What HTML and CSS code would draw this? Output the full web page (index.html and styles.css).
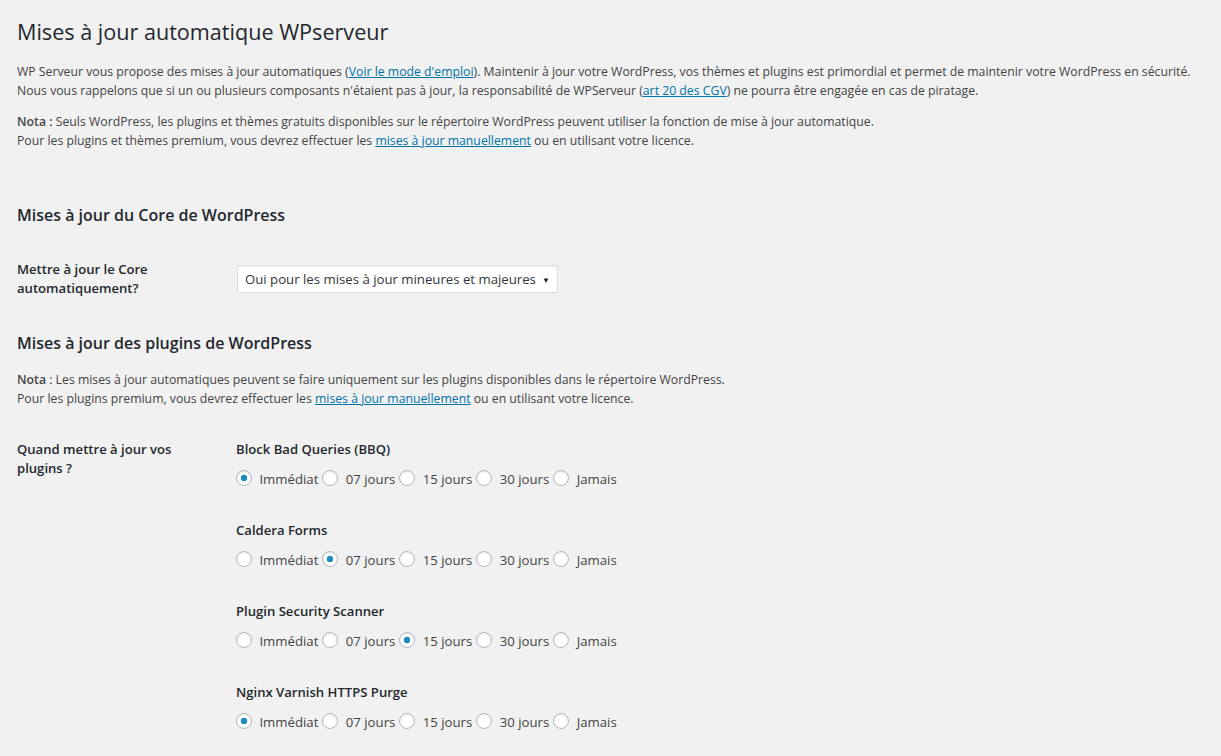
FILE: index.html
```html
<!DOCTYPE html>
<html lang="fr">
<head>
  <meta charset="UTF-8" />
  <title>Mises à jour automatique WPserveur</title>
  <link rel="stylesheet" href="styles.css">
</head>
<body>
  <div class="wrap">
    <h1>Mises à jour automatique WPserveur</h1>
    <p class="intro">WP Serveur vous propose des mises à jour automatiques (<a href="#">Voir le mode d'emploi</a>). Maintenir à jour votre WordPress, vos thèmes et plugins est primordial et permet de maintenir votre WordPress en sécurité.<br>
    Nous vous rappelons que si un ou plusieurs composants n'étaient pas à jour, la responsabilité de WPServeur (<a href="#">art 20 des CGV</a>) ne pourra être engagée en cas de piratage.</p>
    <p class="intro"><strong>Nota :</strong> Seuls WordPress, les plugins et thèmes gratuits disponibles sur le répertoire WordPress peuvent utiliser la fonction de mise à jour automatique.<br>
    Pour les plugins et thèmes premium, vous devrez effectuer les <a href="#">mises à jour manuellement</a> ou en utilisant votre licence.</p>

    <h2 class="core-title">Mises à jour du Core de WordPress</h2>
    <div class="form-row center">
      <label class="field-label" for="core">Mettre à jour le Core automatiquement?</label>
      <div class="select" id="core">
        <span>Oui pour les mises à jour mineures et majeures</span>
        <span class="arrow">▼</span>
      </div>
    </div>

    <h2 class="plugins-title">Mises à jour des plugins de WordPress</h2>
    <p class="intro"><strong>Nota</strong> : Les mises à jour automatiques peuvent se faire uniquement sur les plugins disponibles dans le répertoire WordPress.<br>
    Pour les plugins premium, vous devrez effectuer les <a href="#">mises à jour manuellement</a> ou en utilisant votre licence.</p>

    <div class="form-row plugins">
      <div class="field-label">Quand mettre à jour vos plugins ?</div>
      <div class="plugin-list">
        <div class="plugin">
          <div class="plugin-name">Block Bad Queries (BBQ)</div>
          <div class="choices">
            <label><input type="radio" name="bbq" checked> Immédiat</label><label><input type="radio" name="bbq"> 07 jours</label><label><input type="radio" name="bbq"> 15 jours</label><label><input type="radio" name="bbq"> 30 jours</label><label><input type="radio" name="bbq"> Jamais</label>
          </div>
        </div>
        <div class="plugin">
          <div class="plugin-name">Caldera Forms</div>
          <div class="choices">
            <label><input type="radio" name="caldera"> Immédiat</label><label><input type="radio" name="caldera" checked> 07 jours</label><label><input type="radio" name="caldera"> 15 jours</label><label><input type="radio" name="caldera"> 30 jours</label><label><input type="radio" name="caldera"> Jamais</label>
          </div>
        </div>
        <div class="plugin">
          <div class="plugin-name">Plugin Security Scanner</div>
          <div class="choices">
            <label><input type="radio" name="pss"> Immédiat</label><label><input type="radio" name="pss"> 07 jours</label><label><input type="radio" name="pss" checked> 15 jours</label><label><input type="radio" name="pss"> 30 jours</label><label><input type="radio" name="pss"> Jamais</label>
          </div>
        </div>
        <div class="plugin">
          <div class="plugin-name">Nginx Varnish HTTPS Purge</div>
          <div class="choices">
            <label><input type="radio" name="nginx" checked> Immédiat</label><label><input type="radio" name="nginx"> 07 jours</label><label><input type="radio" name="nginx"> 15 jours</label><label><input type="radio" name="nginx"> 30 jours</label><label><input type="radio" name="nginx"> Jamais</label>
          </div>
        </div>
      </div>
    </div>
  </div>
</body>
</html>
```

FILE: styles.css
```css
body {
  margin: 0;
  background: #f1f1f1;
  color: #444;
  font-family: "Open Sans", "Noto Sans", sans-serif;
  font-size: 12.25px;
  line-height: 19px;
}
.wrap {
  padding: 17px 17px 0 17px;
}
h1 {
  margin: 0;
  font-size: 21.6px;
  font-weight: 400;
  line-height: 29px;
  color: #23282d;
}
.intro {
  margin: 0 0 12px 0;
}
h1 + .intro {
  margin-top: 16px;
}
strong {
  font-weight: 600;
}
a {
  color: #0073aa;
  text-decoration: underline;
}
h2 {
  margin: 0;
  font-size: 16px;
  font-weight: 600;
  line-height: 22px;
  color: #23282d;
}
.core-title {
  margin-top: 54px;
}
.plugins-title {
  margin-top: 34px;
  margin-bottom: 16px;
}
.form-row {
  display: flex;
}
.form-row.center {
  align-items: center;
  margin-top: 34px;
}
.field-label {
  width: 220px;
  flex: none;
  font-size: 13.1px;
  font-weight: 600;
  line-height: 19px;
  color: #23282d;
}
.select {
  width: 321px;
  height: 28px;
  box-sizing: border-box;
  display: flex;
  align-items: center;
  justify-content: space-between;
  padding: 0 7px 0 7px;
  background: #fff;
  border: 1px solid #ddd;
  box-shadow: inset 0 1px 2px rgba(0, 0, 0, 0.07);
  font-size: 13.2px;
  white-space: nowrap;
  color: #32373c;
}
.select .arrow {
  font-size: 8px;
  color: #222;
}
.plugins {
  margin-top: 32px;
}
.plugins .field-label {
  width: 160px;
  margin-right: 59px;
}
.plugin {
  margin-bottom: 32px;
}
.plugin-name {
  font-size: 13.1px;
  font-weight: 600;
  line-height: 19px;
  color: #23282d;
}
.choices {
  margin-top: 11px;
  font-size: 13.2px;
  line-height: 19px;
  color: #444;
}
.choices label {
  margin-right: 4px;
}
input[type="radio"] {
  appearance: none;
  -webkit-appearance: none;
  width: 16px;
  height: 16px;
  margin: 0 4px 0 0;
  vertical-align: -2px;
  border: 1px solid #b4b9be;
  border-radius: 50%;
  background: #fff;
  box-shadow: inset 0 1px 2px rgba(0, 0, 0, 0.1);
  box-sizing: border-box;
}
input[type="radio"]:checked {
  background: radial-gradient(circle, #1e8cbe 0, #1e8cbe 3px, #fff 3.6px);
}
```
